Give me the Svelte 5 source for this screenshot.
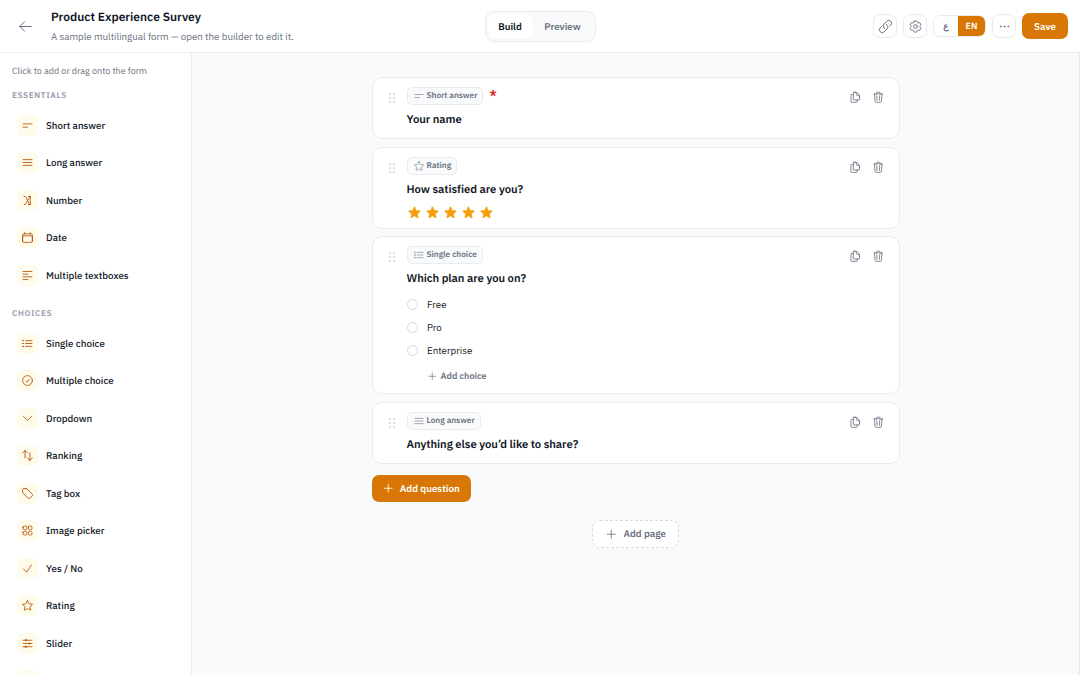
<script>
	const icons = {
		back: 'M10.5 19.5 3 12m0 0 7.5-7.5M3 12h18',
		link: 'M13.19 8.688a4.5 4.5 0 0 1 1.242 7.244l-4.5 4.5a4.5 4.5 0 0 1-6.364-6.364l1.757-1.757m13.35-.622 1.757-1.757a4.5 4.5 0 0 0-6.364-6.364l-4.5 4.5a4.5 4.5 0 0 0 1.242 7.244',
		cog: 'M9.594 3.94c.09-.542.56-.94 1.11-.94h2.593c.55 0 1.02.398 1.11.94l.213 1.281c.063.374.313.686.645.87.074.04.147.083.22.127.325.196.72.257 1.075.124l1.217-.456a1.125 1.125 0 0 1 1.37.49l1.296 2.247a1.125 1.125 0 0 1-.26 1.431l-1.003.827c-.293.241-.438.613-.43.992a7.723 7.723 0 0 1 0 .255c-.008.378.137.75.43.991l1.004.827c.424.35.534.955.26 1.43l-1.298 2.247a1.125 1.125 0 0 1-1.369.491l-1.217-.456c-.355-.133-.75-.072-1.076.124a6.47 6.47 0 0 1-.22.128c-.331.183-.581.495-.644.869l-.213 1.281c-.09.543-.56.94-1.11.94h-2.594c-.55 0-1.019-.398-1.11-.94l-.213-1.281c-.062-.374-.312-.686-.644-.87a6.52 6.52 0 0 1-.22-.127c-.325-.196-.72-.257-1.076-.124l-1.217.456a1.125 1.125 0 0 1-1.369-.49l-1.297-2.247a1.125 1.125 0 0 1 .26-1.431l1.004-.827c.292-.24.437-.613.43-.991a6.932 6.932 0 0 1 0-.255c.007-.38-.138-.751-.43-.992l-1.004-.827a1.125 1.125 0 0 1-.26-1.43l1.297-2.247a1.125 1.125 0 0 1 1.37-.491l1.216.456c.356.133.751.072 1.076-.124.072-.044.146-.086.22-.128.332-.183.582-.495.644-.869l.214-1.28ZM15 12a3 3 0 1 1-6 0 3 3 0 0 1 6 0Z',
		dots: 'M6.75 12a.75.75 0 1 1-1.5 0 .75.75 0 0 1 1.5 0ZM12.75 12a.75.75 0 1 1-1.5 0 .75.75 0 0 1 1.5 0ZM18.75 12a.75.75 0 1 1-1.5 0 .75.75 0 0 1 1.5 0Z',
		short: 'M3.75 9h16.5M3.75 15h8.5',
		long: 'M3.75 6.75h16.5M3.75 12h16.5m-16.5 5.25h16.5',
		number: 'M5.5 4.5h2.2c1 0 1.6.6 2 1.6l5 11.8c.4 1 1 1.6 2 1.6h.8M17 4.5l-9.5 15H6M13.5 4.5H17v15h-3.5',
		date: 'M6.75 3v2.25M17.25 3v2.25M3 18.75V7.5a2.25 2.25 0 0 1 2.25-2.25h13.5A2.25 2.25 0 0 1 21 7.5v11.25m-18 0A2.25 2.25 0 0 0 5.25 21h13.5A2.25 2.25 0 0 0 21 18.75m-18 0v-7.5A2.25 2.25 0 0 1 5.25 9h13.5A2.25 2.25 0 0 1 21 11.25v7.5',
		textboxes: 'M3.75 4.5h16.5M3.75 9.5h9M3.75 14.5h16.5M3.75 19.5h9',
		list: 'M8.25 6.75h12M8.25 12h12m-12 5.25h12M3.75 6.75h.007v.008H3.75V6.75Zm.375 0a.375.375 0 1 1-.75 0 .375.375 0 0 1 .75 0ZM3.75 12h.007v.008H3.75V12Zm.375 0a.375.375 0 1 1-.75 0 .375.375 0 0 1 .75 0Zm-.375 5.25h.007v.008H3.75v-.008Zm.375 0a.375.375 0 1 1-.75 0 .375.375 0 0 1 .75 0Z',
		checkCircle: 'M9 12.75 11.25 15 15 9.75M21 12a9 9 0 1 1-18 0 9 9 0 0 1 18 0Z',
		chevron: 'm19.5 8.25-7.5 7.5-7.5-7.5',
		ranking: 'M3 7.5 7.5 3m0 0L12 7.5M7.5 3v13.5m13.5 0L16.5 21m0 0L12 16.5m4.5 4.5V7.5',
		tag: 'M9.568 3H5.25A2.25 2.25 0 0 0 3 5.25v4.318c0 .597.237 1.17.659 1.591l9.581 9.581c.699.699 1.78.872 2.607.33a18.095 18.095 0 0 0 5.223-5.223c.542-.827.369-1.908-.33-2.607L11.16 3.66A2.25 2.25 0 0 0 9.568 3Z',
		grid: 'M3.75 6A2.25 2.25 0 0 1 6 3.75h2.25A2.25 2.25 0 0 1 10.5 6v2.25a2.25 2.25 0 0 1-2.25 2.25H6a2.25 2.25 0 0 1-2.25-2.25V6ZM3.75 15.75A2.25 2.25 0 0 1 6 13.5h2.25a2.25 2.25 0 0 1 2.25 2.25V18a2.25 2.25 0 0 1-2.25 2.25H6A2.25 2.25 0 0 1 3.75 18v-2.25ZM13.5 6a2.25 2.25 0 0 1 2.25-2.25H18A2.25 2.25 0 0 1 20.25 6v2.25A2.25 2.25 0 0 1 18 10.5h-2.25a2.25 2.25 0 0 1-2.25-2.25V6ZM13.5 15.75a2.25 2.25 0 0 1 2.25-2.25H18a2.25 2.25 0 0 1 2.25 2.25V18A2.25 2.25 0 0 1 18 20.25h-2.25A2.25 2.25 0 0 1 13.5 18v-2.25Z',
		check: 'm4.5 12.75 6 6 9-13.5',
		star: 'M11.48 3.499a.562.562 0 0 1 1.04 0l2.125 5.111a.563.563 0 0 0 .475.345l5.518.442c.499.04.701.663.321.988l-4.204 3.602a.563.563 0 0 0-.182.557l1.285 5.385a.562.562 0 0 1-.84.61l-4.725-2.885a.562.562 0 0 0-.586 0L6.982 20.54a.562.562 0 0 1-.84-.61l1.285-5.386a.562.562 0 0 0-.182-.557l-4.204-3.602a.562.562 0 0 1 .321-.988l5.518-.442a.563.563 0 0 0 .475-.345L11.48 3.5Z',
		slider: 'M10.5 6h9.75M10.5 6a1.5 1.5 0 1 1-3 0m3 0a1.5 1.5 0 1 0-3 0M3.75 6H7.5m3 12h9.75m-9.75 0a1.5 1.5 0 0 1-3 0m3 0a1.5 1.5 0 0 0-3 0m-3.75 0H7.5m9-6h3.75m-3.75 0a1.5 1.5 0 0 1-3 0m3 0a1.5 1.5 0 0 0-3 0m-9.75 0h9.75',
		plus: 'M12 4.5v15m7.5-7.5h-15',
		copy: 'M15.75 17.25v3.375c0 .621-.504 1.125-1.125 1.125h-9.75a1.125 1.125 0 0 1-1.125-1.125V7.875c0-.621.504-1.125 1.125-1.125H6.75a9.06 9.06 0 0 1 1.5.124m7.5 10.376h3.375c.621 0 1.125-.504 1.125-1.125V11.25c0-4.46-3.243-8.161-7.5-8.876a9.06 9.06 0 0 0-1.5-.124H9.375c-.621 0-1.125.504-1.125 1.125v3.5m7.5 10.375H9.375a1.125 1.125 0 0 1-1.125-1.125v-9.25m12 6.625v-1.875a3.375 3.375 0 0 0-3.375-3.375h-1.5a1.125 1.125 0 0 1-1.125-1.125v-1.5a3.375 3.375 0 0 0-3.375-3.375H9.75',
		trash: 'm14.74 9-.346 9m-4.788 0L9.26 9m9.968-3.21c.342.052.682.107 1.022.166m-1.022-.165L18.16 19.673a2.25 2.25 0 0 1-2.244 2.077H8.084a2.25 2.25 0 0 1-2.244-2.077L4.772 5.79m14.456 0a48.108 48.108 0 0 0-3.478-.397m-12 .562c.34-.059.68-.114 1.022-.165m0 0a48.11 48.11 0 0 1 3.478-.397m7.5 0v-.916c0-1.18-.91-2.164-2.09-2.201a51.964 51.964 0 0 0-3.32 0c-1.18.037-2.09 1.022-2.09 2.201v.916m7.5 0a48.667 48.667 0 0 0-7.5 0'
	};

	const groups = [
		{
			title: 'Essentials',
			items: [
				{ icon: 'short', label: 'Short answer' },
				{ icon: 'long', label: 'Long answer' },
				{ icon: 'number', label: 'Number' },
				{ icon: 'date', label: 'Date' },
				{ icon: 'textboxes', label: 'Multiple textboxes' }
			]
		},
		{
			title: 'Choices',
			items: [
				{ icon: 'list', label: 'Single choice' },
				{ icon: 'checkCircle', label: 'Multiple choice' },
				{ icon: 'chevron', label: 'Dropdown' },
				{ icon: 'ranking', label: 'Ranking' },
				{ icon: 'tag', label: 'Tag box' },
				{ icon: 'grid', label: 'Image picker' },
				{ icon: 'check', label: 'Yes / No' },
				{ icon: 'star', label: 'Rating' },
				{ icon: 'slider', label: 'Slider' },
				{ icon: 'long', label: '' }
			]
		}
	];

	const questions = [
		{ icon: 'short', type: 'Short answer', title: 'Your name', required: true },
		{ icon: 'star', type: 'Rating', title: 'How satisfied are you?', stars: 5 },
		{ icon: 'list', type: 'Single choice', title: 'Which plan are you on?', choices: ['Free', 'Pro', 'Enterprise'] },
		{ icon: 'long', type: 'Long answer', title: 'Anything else you’d like to share?' }
	];

	let mode = $state('Build');
	let lang = $state('EN');
</script>

{#snippet icon(name, size)}
	<svg class="icon" width={size} height={size} viewBox="0 0 24 24" aria-hidden="true">
		<path d={icons[name]} />
	</svg>
{/snippet}

<div class="app">
	<header class="topbar">
		<div class="heading">
			<button class="back" aria-label="Back">{@render icon('back', 15)}</button>
			<div class="titles">
				<h1>Product Experience Survey</h1>
				<p>A sample multilingual form — open the builder to edit it.</p>
			</div>
		</div>

		<div class="tabs">
			{#each ['Build', 'Preview'] as tab}
				<button class="tab" class:active={mode === tab} onclick={() => (mode = tab)}>{tab}</button>
			{/each}
		</div>

		<div class="actions">
			<button class="square" aria-label="Copy link">{@render icon('link', 15)}</button>
			<button class="square" aria-label="Settings">{@render icon('cog', 15)}</button>
			<div class="langs">
				{#each ['ع', 'EN'] as code}
					<button class="lang" class:active={lang === code} onclick={() => (lang = code)}>{code}</button>
				{/each}
			</div>
			<button class="square" aria-label="More">{@render icon('dots', 15)}</button>
			<button class="save">Save</button>
		</div>
	</header>

	<div class="body">
		<aside class="sidebar">
			<p class="hint">Click to add or drag onto the form</p>
			{#each groups as group}
				<section class="group">
					<h2>{group.title}</h2>
					{#each group.items as item}
						<button class="item">
							<span class="tile">{@render icon(item.icon, 13)}</span>
							<span>{item.label}</span>
						</button>
					{/each}
				</section>
			{/each}
		</aside>

		<main class="canvas">
			<div class="form">
				{#each questions as q}
					<article class="card">
						<svg class="grip" width="6" height="10" viewBox="0 0 6 10" aria-hidden="true">
							{#each [1, 5, 9] as y}
								<circle cx="1" cy={y} r="0.85" />
								<circle cx="5" cy={y} r="0.85" />
							{/each}
						</svg>
						<div class="content">
							<div class="meta">
								<span class="badge">{@render icon(q.icon, 12)}{q.type}</span>
								{#if q.required}<span class="required">*</span>{/if}
							</div>
							<h3>{q.title}</h3>
							{#if q.stars}
								<div class="stars">
									{#each { length: q.stars } as _}
										<span class="star">{@render icon('star', 15)}</span>
									{/each}
								</div>
							{/if}
							{#if q.choices}
								<ul class="choices">
									{#each q.choices as choice}
										<li><span class="radio"></span>{choice}</li>
									{/each}
								</ul>
								<button class="add-choice">{@render icon('plus', 10.5)}Add choice</button>
							{/if}
						</div>
						<div class="tools">
							<button aria-label="Duplicate">{@render icon('copy', 12.5)}</button>
							<button aria-label="Delete">{@render icon('trash', 12.5)}</button>
						</div>
					</article>
				{/each}

				<button class="add-question">{@render icon('plus', 12.5)}Add question</button>
				<button class="add-page">{@render icon('plus', 12.5)}Add page</button>
			</div>
		</main>
	</div>
</div>

<style>
	:global(body) {
		margin: 0;
		overflow: hidden;
	}

	.app {
		display: flex;
		flex-direction: column;
		height: 100vh;
		font-family: 'IBM Plex Sans', Roboto, 'Open Sans', sans-serif;
		text-rendering: geometricPrecision;
		color: #111827;
		background: #fff;
	}

	* {
		box-sizing: border-box;
	}

	button {
		margin: 0;
		padding: 0;
		border: 0;
		background: none;
		color: inherit;
		font: inherit;
		text-rendering: inherit;
		cursor: pointer;
	}

	h1,
	h2,
	h3,
	p,
	ul {
		margin: 0;
		padding: 0;
	}

	.icon {
		display: block;
		flex: none;
		fill: none;
		stroke: currentColor;
		stroke-width: 1.6;
		stroke-linecap: round;
		stroke-linejoin: round;
	}

	/* Top bar */
	.topbar {
		flex: none;
		display: grid;
		grid-template-columns: 1fr auto 1fr;
		align-items: center;
		height: 53px;
		padding: 0 12px;
		border-bottom: 1px solid #eceef1;
	}

	.heading {
		display: flex;
		align-items: center;
		gap: 18px;
		padding-left: 6px;
	}

	.back {
		color: #6b7280;
	}

	.titles {
		padding-top: 2px;
	}

	h1 {
		font-size: 12px;
		line-height: 18px;
		font-weight: 600;
		color: #0f172a;
	}

	.titles p {
		padding-top: 2px;
		font-size: 9.75px;
		line-height: 16px;
		color: #6b7280;
	}

	.tabs {
		display: flex;
		width: 111px;
		padding: 2px;
		border: 1px solid #e9ecef;
		border-radius: 9px;
		background: #f8fafc;
	}

	.tab {
		flex: none;
		width: 60px;
		height: 25px;
		border-radius: 7px;
		font-size: 9.75px;
		font-weight: 600;
		color: #6b7280;
	}

	.tab:first-child {
		width: 45px;
	}

	.tab.active {
		background: #fff;
		color: #111827;
		box-shadow: 0 0 2px rgba(15, 23, 42, 0.05);
	}

	.actions {
		display: flex;
		align-items: center;
		justify-content: flex-end;
		gap: 6px;
	}

	.square {
		display: grid;
		place-items: center;
		width: 24px;
		height: 24.5px;
		border: 1px solid #e9ecef;
		border-radius: 7px;
		color: #6b7280;
	}

	.langs {
		display: flex;
		height: 22px;
		border: 1px solid #e9ecef;
		border-radius: 7px;
		overflow: hidden;
	}

	.lang {
		width: 24px;
		font-size: 9px;
		font-weight: 600;
		color: #6b7280;
	}

	.lang.active {
		width: 27px;
		background: #d97706;
		color: #fff;
	}

	.save {
		width: 46px;
		height: 26px;
		border-radius: 7px;
		background: #d97706;
		color: #fff;
		font-size: 9.75px;
		font-weight: 600;
	}

	/* Question palette */
	.body {
		flex: 1;
		display: flex;
		min-height: 0;
	}

	.sidebar {
		flex: none;
		width: 192px;
		padding: 12px 12px 0;
		border-right: 1px solid #e9ecef;
		overflow: hidden;
	}

	.hint {
		font-size: 9px;
		line-height: 14px;
		color: #6b7280;
	}

	.group {
		padding-top: 10.5px;
		margin-bottom: 3px;
	}

	h2 {
		margin-bottom: 5px;
		font-size: 8.25px;
		line-height: 12px;
		font-weight: 600;
		letter-spacing: 0.6px;
		text-transform: uppercase;
		color: #949bab;
	}

	.item {
		display: flex;
		align-items: center;
		gap: 8px;
		width: 100%;
		height: 37.5px;
		padding-left: 5px;
		font-size: 9.75px;
		font-weight: 500;
		text-align: left;
	}

	.tile {
		display: grid;
		place-items: center;
		width: 21px;
		height: 21px;
		border-radius: 6px;
		background: #fffbeb;
		color: #b45309;
	}

	/* Form canvas */
	.canvas {
		flex: 1;
		padding-top: 24.25px;
		border-right: 1px solid #e9ecef;
		background: #f8fafc;
	}

	.form {
		display: flex;
		flex-direction: column;
		align-items: flex-start;
		width: 528px;
		margin: 0 auto;
	}

	.card {
		display: flex;
		align-items: flex-start;
		width: 100%;
		margin-bottom: 7.75px;
		padding: 9px 14.5px 10px 16px;
		border: 1px solid #e9ebef;
		border-radius: 10px;
		background: #fff;
	}

	.grip {
		flex: none;
		margin-top: 5.5px;
		fill: #b6bcc6;
	}

	.content {
		flex: 1;
		padding-left: 12px;
	}

	.meta {
		display: flex;
		gap: 6px;
	}

	.badge {
		display: flex;
		align-items: center;
		gap: 2px;
		height: 17.5px;
		padding: 0 5px;
		border: 1px solid #e9ecef;
		border-radius: 5px;
		background: #f8fafc;
		color: #6b7280;
		font-size: 8.25px;
		font-weight: 600;
	}

	.badge .icon,
	.badge :global(.icon) {
		stroke: #8f95a1;
	}

	.required {
		color: #dc2626;
		font-size: 12px;
		line-height: 17.5px;
		font-weight: 700;
	}

	h3 {
		margin-top: 6.5px;
		font-size: 11.25px;
		line-height: 17px;
		font-weight: 600;
		letter-spacing: -0.05px;
	}

	.stars {
		display: flex;
		gap: 3px;
		padding: 6.5px 0 0 0.5px;
		margin-bottom: -2px;
	}

	.star {
		color: #f59e0b;
	}

	.star :global(.icon) {
		fill: currentColor;
		stroke-width: 1;
	}

	.choices {
		padding-top: 6px;
		list-style: none;
	}

	.choices li {
		display: flex;
		align-items: center;
		gap: 9.5px;
		height: 23px;
		font-size: 9.75px;
	}

	.radio {
		width: 11px;
		height: 11px;
		border: 1px solid #d5d9df;
		border-radius: 50%;
	}

	.add-choice {
		display: flex;
		align-items: center;
		gap: 3.5px;
		height: 21px;
		margin: 3.5px 0 -3.5px 20px;
		font-size: 9px;
		font-weight: 600;
		color: #6b7280;
	}

	.tools {
		display: flex;
		gap: 10px;
		padding-top: 4px;
		color: #6b7280;
	}

	.add-question,
	.add-page {
		display: flex;
		align-items: center;
		justify-content: center;
		font-size: 9.75px;
		font-weight: 600;
	}

	.add-question {
		gap: 5px;
		width: 99px;
		height: 27.25px;
		margin-top: 3px;
		border-radius: 7px;
		background: #d97706;
		color: #fff;
	}

	.add-page {
		align-self: center;
		gap: 6px;
		width: 87px;
		height: 28.25px;
		margin-top: 17.75px;
		border: 1px dashed #d9dce2;
		border-radius: 8px;
		background: #fff;
		color: #6b7280;
	}
</style>
